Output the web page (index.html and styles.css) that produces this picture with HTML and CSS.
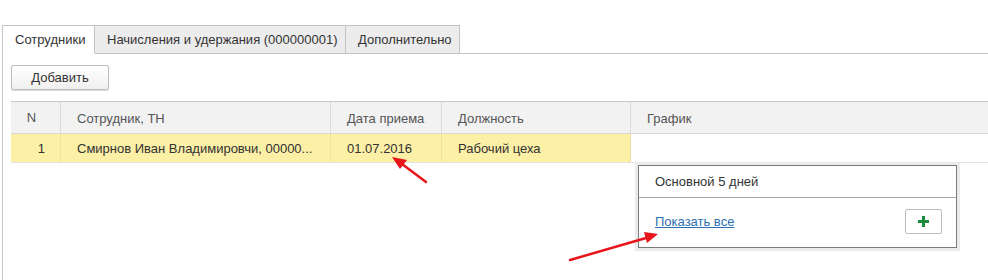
FILE: index.html
```html
<!DOCTYPE html>
<html lang="ru">
<head>
<meta charset="utf-8">
<link rel="stylesheet" href="styles.css">
</head>
<body>
<div class="tabs">
  <div class="tab active">Сотрудники</div>
  <div class="tab">Начисления и удержания (000000001)</div>
  <div class="tab">Дополнительно</div>
  <div class="tab-rest"></div>
</div>
<div class="panel">
  <div class="toolbar"><button class="btn">Добавить</button></div>
  <div class="grid">
    <div class="row head">
      <div class="cell c-n center">N</div>
      <div class="cell c-emp">Сотрудник, ТН</div>
      <div class="cell c-date">Дата приема</div>
      <div class="cell c-pos">Должность</div>
      <div class="cell c-sch last">График</div>
    </div>
    <div class="row data">
      <div class="cell c-n right">1</div>
      <div class="cell c-emp">Смирнов Иван Владимировчи, 00000...</div>
      <div class="cell c-date">01.07.2016</div>
      <div class="cell c-pos">Рабочий цеха</div>
      <div class="cell c-sch last edit"></div>
    </div>
  </div>
</div>
<div class="popup">
  <div class="popup-item">Основной 5 дней</div>
  <div class="popup-foot">
    <a class="link" href="#">Показать все</a>
    <button class="plus"><svg width="11" height="11" viewBox="0 0 11 11"><path d="M4 0h3v4h4v3H7v4H4V7H0V4h4z" fill="#1e8a3c"/></svg></button>
  </div>
</div>
<svg class="arrows" width="988" height="280" viewBox="0 0 988 280">
  <line x1="426" y1="182" x2="402" y2="164" stroke="#e8151b" stroke-width="2.5" stroke-linecap="round"/>
  <path d="M392 157 L407 160 L400 169 Z" fill="#e8151b"/>
  <line x1="570" y1="260" x2="646" y2="238" stroke="#e8151b" stroke-width="2.5" stroke-linecap="round"/>
  <path d="M658 234 L644 232 L647 243 Z" fill="#e8151b"/>
</svg>
</body>
</html>
```

FILE: styles.css
```css
* { box-sizing: border-box; }
html, body { margin: 0; padding: 0; background: #fff; }
body {
  width: 988px; height: 280px; overflow: hidden; position: relative;
  font-family: "Liberation Sans", Arial, sans-serif; font-size: 13px; color: #333;
}
.tabs { display: flex; padding: 25px 0 0 2px; height: 54px; }
.tab {
  height: 29px; padding: 0 12px; line-height: 28px; background: #ececec;
  border: 1px solid #c4c4c4; border-left: none; border-bottom: 1px solid #c4c4c4;
  color: #333; white-space: nowrap;
}
.tab:first-child { border-left: 1px solid #c4c4c4; }
.tab.active { background: #fff; border-bottom-color: #fff; }
.tab-rest { flex: 1; border-bottom: 1px solid #c4c4c4; }
.tabs .tab:nth-child(1) { width: 93px; }
.tabs .tab:nth-child(2) { width: 251px; }
.tabs .tab:nth-child(3) { width: 114px; }
.panel { margin-left: 2px; border-left: 1px solid #c4c4c4; padding: 11px 0 0 8px; height: 226px; }
.btn {
  width: 98px; height: 25px; font: inherit; color: #333; padding: 0;
  background: linear-gradient(#fff, #f0f0f0); border: 1px solid #bcbcbc; border-radius: 2px;
  box-shadow: 0 1px 1px rgba(0,0,0,0.15);
}
.grid { margin-top: 11px; }
.row { display: flex; }
.head { height: 33px; background: #f2f2f2; border-top: 1px solid #c8c8c8; border-bottom: 1px solid #d8d8d8; color: #555; }
.data { height: 29px; border-bottom: 1px solid #e2e2e2; }
.cell { display: flex; align-items: center; padding: 0 16px; border-right: 1px solid #dcdcdc; white-space: nowrap; overflow: hidden; }
.head .cell { padding-top: 1px; }
.data .cell { background: #fcefa6; border-right-color: #efe2a0; }
.data .cell.edit { background: #fff; }
.cell.last { border-right: none; }
.c-n { width: 50px; }
.c-n.center { justify-content: center; padding: 0 8px 0 0; }
.c-n.right { justify-content: flex-end; padding: 0 15px 0 0; }
.c-emp { width: 270px; }
.c-date { width: 111px; }
.c-pos { width: 189px; }
.c-sch { flex: 1; }
.popup {
  position: absolute; left: 638px; top: 165px; width: 319px; height: 83px;
  background: #fff; border: 1px solid #7a7a7a;
  box-shadow: 0 0 0 3px #ebebeb;
}
.popup-item { height: 32px; padding: 0 16px; display: flex; align-items: center; border-bottom: 1px solid #aaa; color: #333; }
.popup-foot { display: flex; align-items: center; justify-content: space-between; padding: 11px 14px 0 16px; }
.link { color: #2a6fb0; text-decoration: underline; }
.plus {
  width: 37px; height: 25px; padding: 0; display: flex; align-items: center; justify-content: center;
  background: #fff; border: 1px solid #bcbcbc; border-radius: 2px;
}
.arrows { position: absolute; left: 0; top: 0; pointer-events: none; }
```
